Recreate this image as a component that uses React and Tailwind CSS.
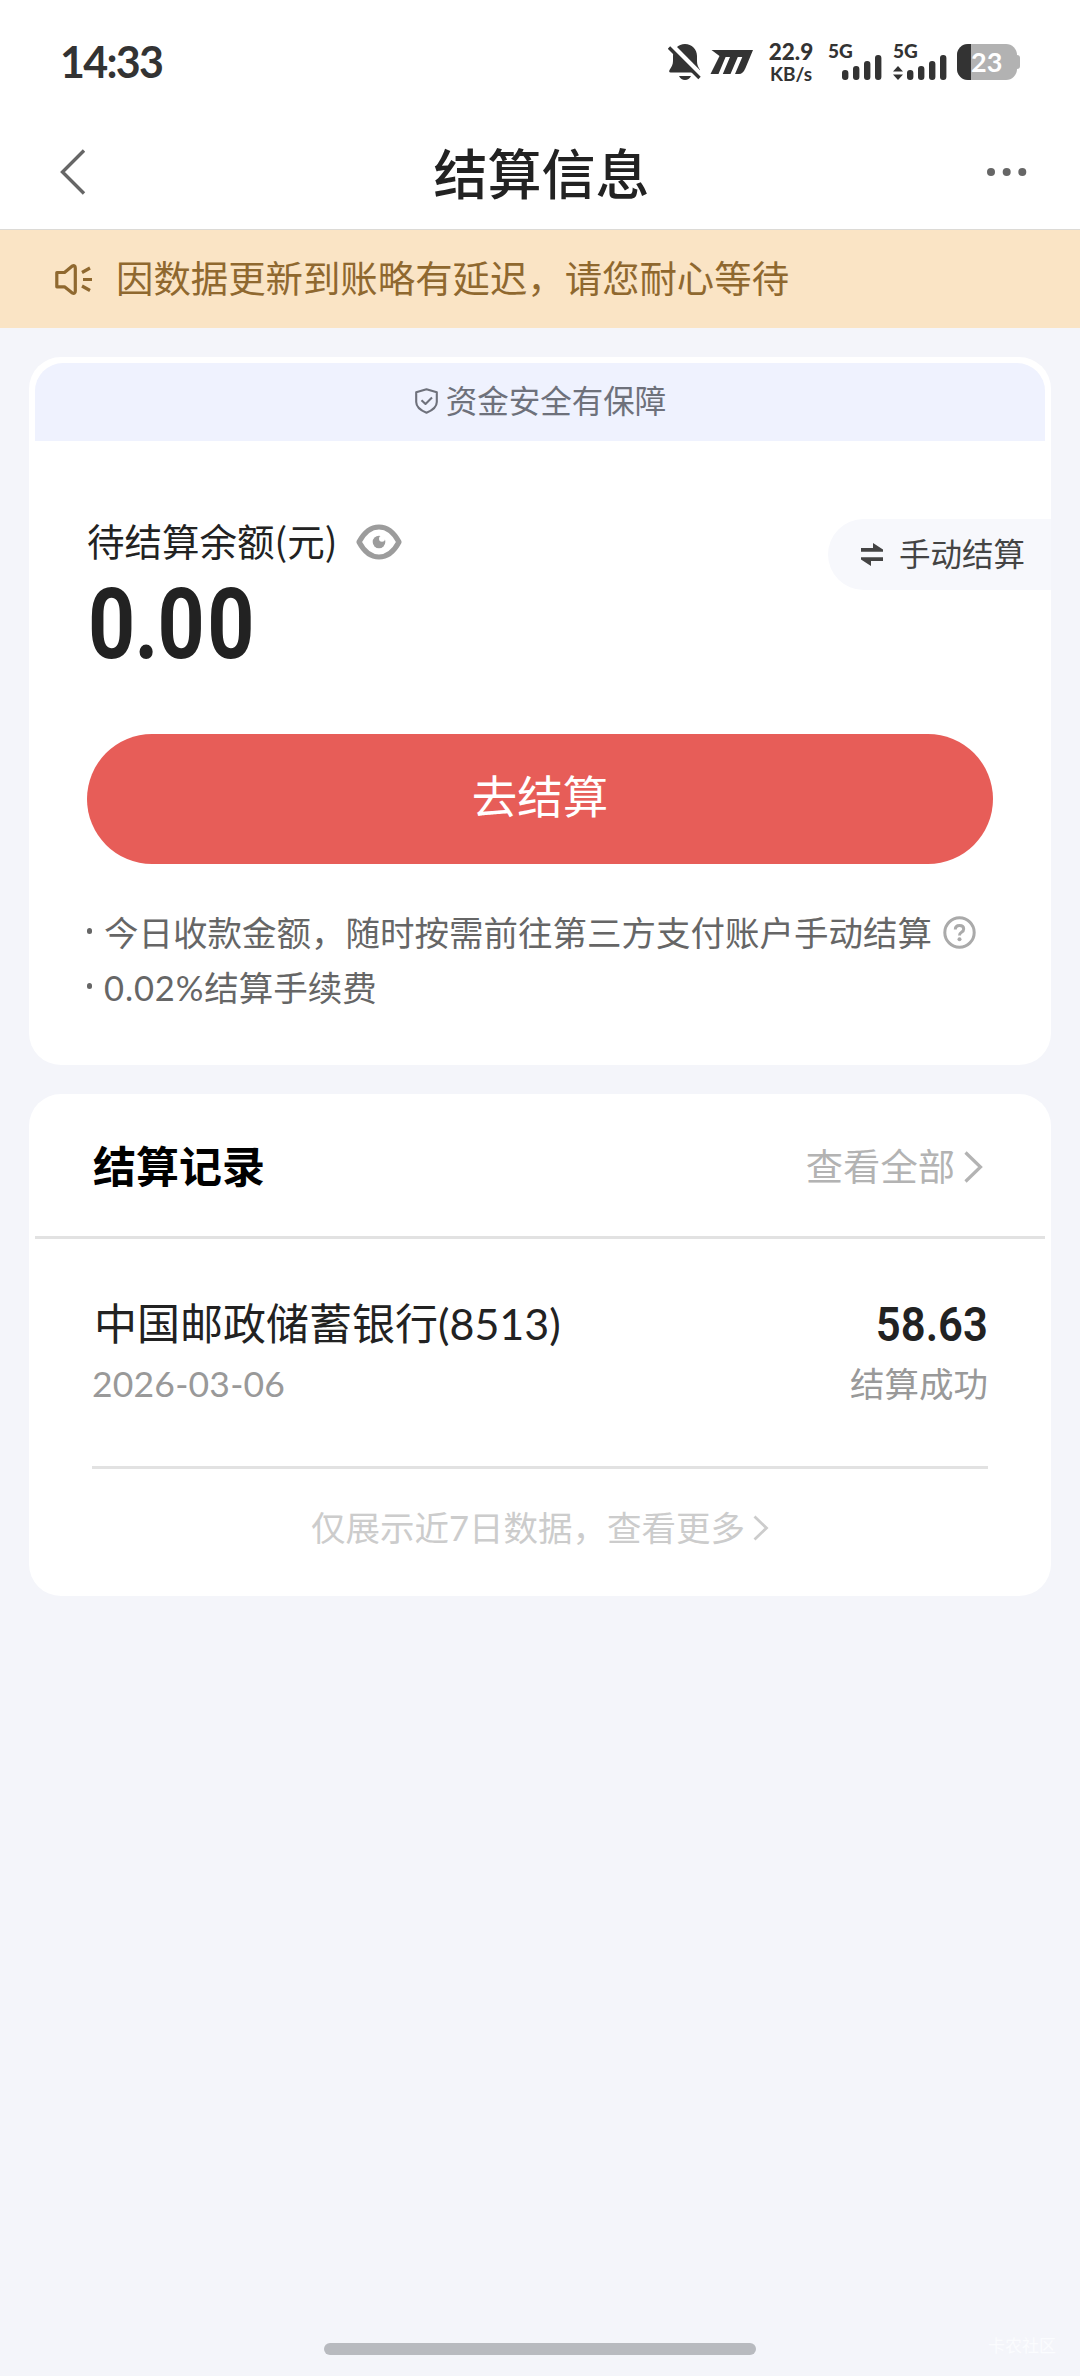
import React from "react";

const SignalBars = () => (
  <svg width="40" height="25" viewBox="0 0 40 25" fill="#333">
    <rect x="0" y="15" width="6.4" height="10" rx="3" />
    <rect x="11" y="11" width="6.4" height="14" rx="3" />
    <rect x="22" y="6" width="6.4" height="19" rx="3" />
    <rect x="33" y="0" width="6.4" height="25" rx="3" />
  </svg>
);

const Chevron = ({ w, h, stroke }) => (
  <svg width={w} height={h} viewBox={`0 0 ${w} ${h}`} fill="none" stroke="currentColor" strokeWidth={stroke}>
    <path d={`M1.5 1.5 L${w - 2.5} ${h / 2} L1.5 ${h - 1.5}`} />
  </svg>
);

function StatusBar() {
  return (
    <div className="flex h-[124px] items-center pl-[60px] pr-[60px] text-[#333]">
      <span className="text-[43px] leading-[60px] font-bold tracking-[-1.7px]">14:33</span>
      <svg className="ml-auto" width="34" height="37" viewBox="0 0 34 37">
        <path
          fill="#333"
          d="M17 0C23.8 0 29 5.2 29 12V17.500C29 21 30.500 23.500 32 26V28.500H2.500Q0.600 28.500 1.500 26C3.500 22.500 5 21 5 17V12C5 5.200 10.200 0 17 0Z"
        />
        <path fill="#333" d="M11 32H23Q21 36 17 36Q13 36 11 32Z" />
        <path d="M-1 1L33 35.500" stroke="#fff" strokeWidth="6.500" transform="translate(2.500 -1)" />
        <path d="M1 3.500L31.500 34" stroke="#333" strokeWidth="3.400" />
      </svg>
      <svg className="ml-[8px]" width="43" height="24" viewBox="0 0 43 24" fill="#333">
        <path d="M1.500 0H43L35.500 18Q33 24 29 24H25L32.300 7H27.800L20.500 24H12.800L20 7H15.600L8.500 24H0.500L9.500 6Z" />
      </svg>
      <div className="ml-[15px] flex w-[46px] flex-col items-center font-bold">
        <span className="text-[22.500px] leading-[20px] font-black">22.9</span>
        <span className="mt-[2px] text-[19px] leading-[19px]">KB/s</span>
      </div>
      <div className="ml-[14px] flex h-[36px] w-[54px] flex-col">
        <span className="h-[11px] text-[19px] leading-[14px] font-black">5G</span>
        <span className="flex justify-end">
          <SignalBars />
        </span>
      </div>
      <div className="ml-[11px] flex h-[36px] w-[54px] flex-col">
        <span className="h-[11px] text-[19px] leading-[14px] font-black">5G</span>
        <span className="flex items-end justify-between">
          <svg width="10" height="14" viewBox="0 0 10 14" fill="#333">
            <path d="M5 0L10 5.500H0ZM5 14L10 8.500H0Z" />
          </svg>
          <SignalBars />
        </span>
      </div>
      <div className="ml-[10px] flex items-center">
        <div className="flex h-[36px] w-[60px] items-center overflow-hidden rounded-[11px] bg-[#b2b2b2]">
          <span className="h-full w-[14px] bg-[#333]" />
          <span className="text-[27px] leading-[36px] font-bold text-white">23</span>
        </div>
        <span className="h-[14px] w-[3px] rounded-r-[3px] bg-[#b2b2b2]" />
      </div>
    </div>
  );
}

function NavBar() {
  return (
    <div className="flex h-[106px] items-center justify-between border-b border-[#dcdad6] pr-[53px] pb-[9px] pl-[60px] text-[#666]">
      <svg className="mt-[-1px]" width="26" height="46" viewBox="0 0 26 46" fill="none" stroke="#666" strokeWidth="3.400">
        <path d="M24 1.500L2.500 23L24 44.500" />
      </svg>
      <h1 className="ml-[10px] pt-[6px] text-[54px] leading-[60px] font-medium text-[#222]">结算信息</h1>
      <svg className="mt-[-1px]" width="40" height="8" viewBox="0 0 40 8" fill="#666">
        <circle cx="4" cy="4" r="4" />
        <circle cx="19.700" cy="4" r="4" />
        <circle cx="35.300" cy="4" r="4" />
      </svg>
    </div>
  );
}

function Notice() {
  return (
    <div className="flex h-[98px] items-center bg-[#fae4c5] pl-[55px] text-[#8f682f]">
      <svg width="37" height="31" viewBox="0 0 37 31" fill="none" stroke="currentColor" strokeWidth="3.200" strokeLinejoin="round">
        <path d="M1.800 8.500H9.500L17 2.200Q20.300 0.500 20.300 4V27Q20.300 30.500 17 28.800L9.500 22.800H1.800Z" />
        <path d="M27 8.500L35 4M28 15.500H37M27 22L35 26.500" />
      </svg>
      <span className="ml-[24px] text-[37.400px] leading-[56px] whitespace-nowrap">因数据更新到账略有延迟，请您耐心等待</span>
    </div>
  );
}

function BalanceCard() {
  return (
    <section className="mx-[29px] mt-[29px] h-[708px] rounded-[32px] bg-white pt-[6px]">
      <div className="mx-[6px] flex h-[78px] items-center justify-center rounded-t-[28px] bg-[#eff2fe] pb-[2px] pl-px text-[#6e717b]">
        <svg width="23" height="26" viewBox="0 0 23 26" fill="none" stroke="currentColor" strokeWidth="2.100" strokeLinejoin="round">
          <path d="M11.500 1.200L21.800 4.300V14Q21.800 20.500 11.500 24.800Q1.200 20.500 1.200 14V4.300Z" />
          <path d="M6.500 12.200L10.500 16L17 9.500" />
        </svg>
        <span className="ml-[8px] text-[31.500px] leading-[48px]">资金安全有保障</span>
      </div>

      <div className="mt-[76px] flex items-start justify-between pl-[58px]">
        <div>
          <div className="flex h-[50px] items-center text-[#222]">
            <span className="mt-[-4px] font-['Noto_Sans_CJK_SC',sans-serif] text-[37.500px] leading-[46px]">待结算余额(元)</span>
            <svg className="ml-[19px]" width="46" height="36" viewBox="0 0 46 36" fill="none">
              <path d="M3 18Q11 3 23 3Q35 3 43 18Q35 33 23 33Q11 33 3 18Z" stroke="#9c9c9c" strokeWidth="5.200" strokeLinejoin="round" />
              <circle cx="23" cy="18" r="6.300" fill="#9c9c9c" />
              <circle cx="26" cy="14.800" r="3" fill="#fff" />
            </svg>
          </div>
          <div className="mt-[20px] ml-px flex h-[74px] w-[190px] origin-left scale-x-[0.84] font-['Roboto',sans-serif] text-[98px] leading-[76px] font-bold text-[#222]">
            <span>0</span>
            <span className="mx-[-1px]">.</span>
            <span className="tracking-[3px]">00</span>
          </div>
        </div>
        <button className="mt-[2px] flex h-[71px] w-[223px] items-center rounded-l-full bg-[#f7f8fc] pl-[33px] text-[#444]">
          <svg width="22" height="23" viewBox="0 0 22 23" fill="#444">
            <path d="M0 5H12V0L22 6.500V8.800H0Z" />
            <path d="M22 18H10V23L0 16.500V14.200H22Z" />
          </svg>
          <span className="mt-[-1px] ml-[16px] text-[31.500px] leading-[48px]">手动结算</span>
        </button>
      </div>

      <button className="mx-[58px] mt-[73px] flex h-[130px] w-[906px] items-center justify-center rounded-full bg-[#e75d58] pb-[4px] text-[45.500px] leading-[60px] text-white">
        去结算
      </button>

      <ul className="mt-[41px] pl-[58px] text-[34.500px] leading-[55px] text-[#666]">
        <li className="flex items-center whitespace-nowrap">
          <span className="mt-[-3px] mr-[12px] h-[6px] w-[5px] rounded-full bg-[#666]" />
          今日收款金额，随时按需前往第三方支付账户手动结算
          <svg className="ml-[11px]" width="33" height="33" viewBox="0 0 33 33" fill="none" stroke="#aaa" strokeWidth="3">
            <circle cx="16.500" cy="16.500" r="14.700" />
            <path d="M12.300 13.500Q12.300 9.500 16.500 9.500Q20.700 9.500 20.700 13Q20.700 15 18.500 16.300Q16.500 17.500 16.500 19.500" />
            <circle cx="16.500" cy="23.300" r="2" fill="#aaa" stroke="none" />
          </svg>
        </li>
        <li className="flex items-center whitespace-nowrap">
          <span className="mt-[-3px] mr-[12px] h-[6px] w-[5px] rounded-full bg-[#666]" />
          <span>
            <span className="tracking-[0.9px]">0.02%</span>结算手续费
          </span>
        </li>
      </ul>
    </section>
  );
}

function RecordsCard() {
  return (
    <section className="mx-[29px] mt-[29px] h-[502px] rounded-[32px] bg-white">
      <div className="mx-[6px] flex h-[145px] items-center justify-between border-b-[3px] border-[#e2e2e2] pt-[4px] pr-[62px] pl-[58px]">
        <h2 className="text-[43px] leading-[60px] font-bold text-black">结算记录</h2>
        <div className="flex items-center text-[#b3b3b3]">
          <span className="text-[37.300px] leading-[56px]">查看全部</span>
          <span className="ml-[9px]">
            <Chevron w={19} h={32} stroke={3.2} />
          </span>
        </div>
      </div>
      <div className="mx-[63px] flex h-[230px] flex-col border-b-[3px] border-[#e2e2e2] pt-[55px]">
        <div className="flex h-[60px] items-center justify-between text-[#222]">
          <span className="ml-[2px] text-[43px] leading-[60px]">中国邮政储蓄银行(8513)</span>
          <span className="mt-[2px] origin-right scale-x-[0.89] font-['Roboto',sans-serif] text-[49px] leading-[60px] font-semibold">
            58.63
          </span>
        </div>
        <div className="flex h-[60px] items-center justify-between text-[#999]">
          <span className="text-[35.500px] leading-[60px] tracking-[0.2px]">2026-03-06</span>
          <span className="text-[34.500px] leading-[60px]">结算成功</span>
        </div>
      </div>
      <div className="flex h-[118px] items-center justify-center text-[#ccc]">
        <span className="text-[34.500px] leading-[56px]">仅展示近7日数据，查看更多</span>
        <span className="ml-[8px]">
          <Chevron w={16} h={26} stroke={2.8} />
        </span>
      </div>
    </section>
  );
}

export default function App() {
  return (
    <div className="flex h-[2376px] w-[1080px] flex-col bg-[#f4f5fa] font-['Lato','Noto_Sans_CJK_SC',sans-serif]">
      <header className="bg-white">
        <StatusBar />
        <NavBar />
      </header>
      <Notice />
      <BalanceCard />
      <RecordsCard />
      <footer className="mt-auto grid h-[42px] grid-cols-[324px_432px_1fr] items-start">
        <span className="col-start-2 mt-[9px] h-[12px] rounded-full bg-[#b8babf]" />
        <span className="pr-[24px] text-right text-[17px] leading-[24px] text-[#fbfcfe]">卡农社区</span>
      </footer>
    </div>
  );
}
